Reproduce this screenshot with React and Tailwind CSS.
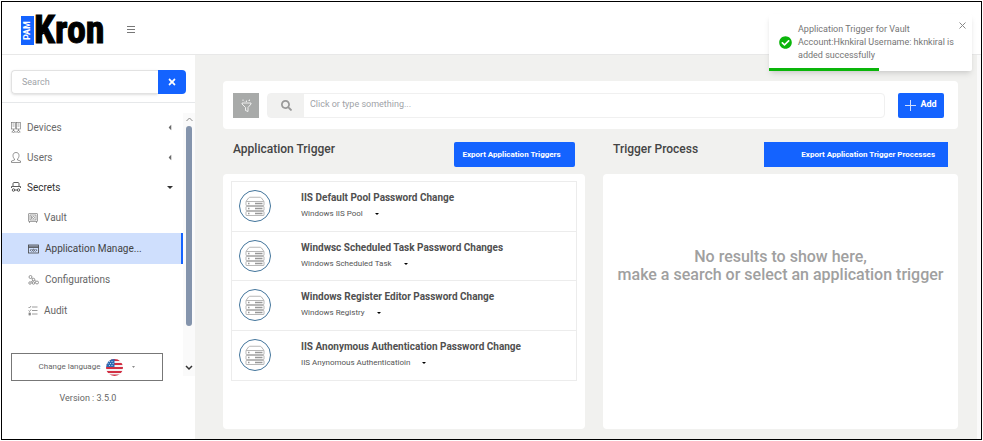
import { FaCheckCircle, FaSearch, FaTimes } from 'react-icons/fa';

const SECTIONS = [
  { id: 'devices', label: 'Devices', icon: DevicesIcon, open: false },
  { id: 'users', label: 'Users', icon: UserIcon, open: false },
  { id: 'secrets', label: 'Secrets', icon: SecretsIcon, open: true },
];

const SECRET_ITEMS = [
  { id: 'vault', label: 'Vault', icon: VaultIcon },
  { id: 'apps', label: 'Application Manage...', icon: AppIcon, active: true },
  { id: 'config', label: 'Configurations', icon: ConfigIcon },
  { id: 'audit', label: 'Audit', icon: AuditIcon },
];

const TRIGGERS = [
  { title: 'IIS Default Pool Password Change', type: 'Windows IIS Pool' },
  { title: 'Windwsc Scheduled Task Password Changes', type: 'Windows Scheduled Task' },
  { title: 'Windows Register Editor Password Change', type: 'Windows Registry' },
  { title: 'IIS Anonymous Authentication Password Change', type: 'IIS Anynomous Authenticatioin' },
];

/* ── Icons ── */

function DevicesIcon() {
  return (
    <svg className="w-[10px] h-[11px] shrink-0" viewBox="0 0 20 22" fill="none" stroke="currentColor" strokeWidth="1.2">
      <rect x="1" y="1" width="8" height="13" />
      <rect x="11" y="1" width="8" height="13" />
      <path d="M3 4h4M3 8h4M13 4h4M13 8h4M5 14v4M15 14v4M1 20h2M7 20h6M17 20h2" />
      <circle cx="5" cy="19" r="2" />
      <circle cx="15" cy="19" r="2" />
    </svg>
  );
}

function UserIcon() {
  return (
    <svg className="w-[10px] h-[11px] shrink-0" viewBox="0 0 20 22" fill="none" stroke="currentColor" strokeWidth="1.4">
      <path d="M7 14c-2-2-3-4-3-7 0-4 2.500-6 6-6s6 2 6 6c0 3-1 5-3 7v2l6 2v3H1v-3l6-2z" />
    </svg>
  );
}

function SecretsIcon() {
  return (
    <svg className="w-[10px] h-[10px] shrink-0" viewBox="0 0 20 20" fill="none" stroke="currentColor" strokeWidth="1.6">
      <path d="M4 8V3c0-1 1-2 2-2h8c1 0 2 1 2 2v5" />
      <path d="M1 12V9h18v3" />
      <circle cx="5" cy="16" r="2.500" />
      <circle cx="15" cy="16" r="2.500" />
      <path d="M7.500 16h5" />
    </svg>
  );
}

function VaultIcon() {
  return (
    <svg className="w-[10px] h-[10px] shrink-0" viewBox="0 0 20 20" fill="none" stroke="currentColor" strokeWidth="1.2">
      <rect x="1" y="1" width="18" height="16" rx="1" />
      <rect x="4" y="4" width="12" height="10" />
      <circle cx="11" cy="9" r="2" />
      <path d="M7 6v6M3 17v3M17 17v3" />
    </svg>
  );
}

function AppIcon() {
  return (
    <svg className="w-[11px] h-[10px] shrink-0" viewBox="0 0 22 20" fill="none" stroke="currentColor" strokeWidth="1.6">
      <rect x="1" y="2" width="20" height="16" />
      <path d="M1 7h20M1 4.500h20" />
      <path d="M7 10l-2.500 2.500L7 15M15 10l2.500 2.500L15 15" />
      <circle cx="11" cy="12.500" r="2" />
    </svg>
  );
}

function ConfigIcon() {
  return (
    <svg className="w-[11px] h-[10px] shrink-0" viewBox="0 0 22 20" fill="none" stroke="currentColor" strokeWidth="1.3">
      <circle cx="5" cy="4" r="3" />
      <circle cx="11" cy="9" r="2.500" />
      <circle cx="4" cy="16" r="2.500" />
      <circle cx="11" cy="16" r="2.500" />
      <circle cx="18" cy="15" r="3" />
      <path d="M7 6l2 1.500M10 11l-4 3M13 10.500l3 2" />
    </svg>
  );
}

function AuditIcon() {
  return (
    <svg className="w-[10px] h-[11px] shrink-0" viewBox="0 0 20 22" fill="none" stroke="currentColor" strokeWidth="1.3">
      <path d="M8 4h11M8 11h11M8 18h11" />
      <path d="M1 4l2 2 3-4M1 11l2 2 3-4" />
      <rect x="2" y="16" width="3" height="4" />
    </svg>
  );
}

function FilterIcon() {
  return (
    <svg className="w-[11px] h-[13px]" viewBox="0 0 22 26" fill="none" stroke="currentColor" strokeWidth="1.6">
      <path d="M2 8h18v2l-6 7v8l-5-2v-6L2 10z" />
      <path d="M4 1v3M11 3v3M17 1v3M7 4l1 1M14 2l1 1" />
    </svg>
  );
}

function ServerIcon() {
  return (
    <svg className="w-5 h-5" viewBox="0 0 40 40" fill="none" stroke="currentColor" strokeWidth="1.4">
      <path d="M2 11l5-7c1-1 2-1.500 3-1.500h20c1 0 2 .5 3 1.500l5 7" />
      <rect x="2" y="11" width="36" height="8" rx="1" />
      <rect x="2" y="21" width="36" height="8" rx="1" />
      <rect x="2" y="31" width="36" height="8" rx="1" />
      <path d="M20 15h15M20 25h15M20 35h15" strokeWidth="3" />
      <path d="M6 15h3M6 25h3M6 35h3" strokeWidth="3" />
    </svg>
  );
}

function Flag() {
  return (
    <svg className="w-[17px] h-[17px]" viewBox="0 0 34 34">
      <clipPath id="flag-round"><circle cx="17" cy="17" r="17" /></clipPath>
      <g clipPath="url(#flag-round)">
        <rect width="34" height="34" fill="#f4f1f2" />
        <path d="M0 2h34M0 10h34M0 18h34M0 26h34M0 33h34" stroke="#d22f43" strokeWidth="4" />
        <rect width="17" height="16" fill="#2c6bb3" />
        <path d="M6 5h2M11 5h2M3 9h2M8 9h2M13 9h2M6 13h2M11 13h2" stroke="#bcd4ee" strokeWidth="2" />
      </g>
    </svg>
  );
}

function CaretDown({ className }) {
  return (
    <svg className={className} viewBox="0 0 10 5" fill="currentColor">
      <path d="M0 0h10L5 5z" />
    </svg>
  );
}

/* ── Page parts ── */

function Header() {
  return (
    <header className="flex items-center h-[53px] pl-[19px] pt-1 bg-white border-b border-[#e8e8e8]">
      <div className="flex items-center">
        <span className="flex items-center justify-center w-[13px] h-[29px] bg-[#1463ff] text-white text-[9px] font-bold [writing-mode:vertical-rl] rotate-180">
          PAM
        </span>
        <span className="w-[70px] text-[38px] leading-[29px] font-bold text-black [-webkit-text-stroke:1px_black] font-['Liberation_Sans_Narrow','Roboto_Condensed','Roboto',sans-serif]">
          Kron
        </span>
      </div>
      <button type="button" aria-label="Toggle menu" className="ml-[23px] text-[#777]">
        <svg className="w-2 h-2" viewBox="0 0 8 8" stroke="currentColor" strokeWidth="1">
          <path d="M0 .5h8M0 3.500h8M0 6.500h8" />
        </svg>
      </button>
    </header>
  );
}

function Sidebar() {
  return (
    <aside className="flex flex-col w-[193px] shrink-0 bg-white">
      <div className="flex items-center h-12 pl-[9px] pt-[14px] pb-2 border-b border-[#e6e8ea]">
        <input
          type="text"
          aria-label="Search menu"
          placeholder="Search"
          className="w-[147px] h-6 px-[10px] text-[9px] border border-r-0 border-[#e2e2e2] rounded-l-sm shadow-sm outline-none placeholder:text-[#a0a3a8]"
        />
        <button type="button" aria-label="Clear search" className="flex items-center justify-center w-7 h-6 bg-[#1463ff] text-white rounded-r-sm">
          <FaTimes className="w-[10px] h-[10px]" />
        </button>
      </div>

      <div className="flex flex-1">
        <div className="flex-1 min-w-0 pt-[9px]">
          <nav>
            {SECTIONS.map(({ id, label, icon: Icon, open }) => (
              <button
                key={id}
                type="button"
                aria-expanded={open}
                className={`flex items-center w-full h-[30px] pl-[9px] pr-[10px] text-[10px] ${open ? 'text-[#333]' : 'text-[#6a6a6a]'}`}
              >
                <Icon />
                <span className="ml-[6px]">{label}</span>
                <CaretDown className={`ml-auto ${open ? 'w-[6px] h-[3px]' : 'w-[6px] h-[3px] rotate-90'}`} />
              </button>
            ))}
            {SECRET_ITEMS.map(({ id, label, icon: Icon, active }) => (
              <a
                key={id}
                href="#"
                className={`flex items-center gap-[6px] h-[31px] pl-[26px] text-[10px] ${
                  active ? 'bg-[#cfdffd] text-[#444] border-r-2 border-[#1463ff]' : 'text-[#666]'
                }`}
              >
                <Icon />
                <span className="whitespace-nowrap">{label}</span>
              </a>
            ))}
          </nav>

          <button type="button" className="flex items-center justify-center w-[152px] h-7 mt-[27px] ml-[9px] border border-[#777] text-[8px] text-[#666]">
            <span>Change language</span>
            <span className="ml-[6px] mr-[9px]"><Flag /></span>
            <CaretDown className="w-[3px] h-[2px]" />
          </button>
          <p className="w-[172px] mt-[10px] text-center text-[9px] leading-[14px] text-[#666]">Version : 3.5.0</p>
        </div>

        {/* Scrollbar */}
        <div className="flex flex-col items-center w-3 h-[263px] mt-[10px] bg-[#fafafa]">
          <svg className="w-[7px] h-[13px] text-[#888]" viewBox="0 0 7 13" fill="none" stroke="currentColor">
            <path d="M.5 8l3-3 3 3" />
          </svg>
          <div className="w-[6px] h-[200px] rounded-full bg-[#8494ac]" />
          <svg className="w-2 h-[13px] mt-auto text-[#333]" viewBox="0 0 8 13" fill="none" stroke="currentColor" strokeWidth="1.500">
            <path d="M1 3l3 3 3-3" />
          </svg>
        </div>
      </div>
    </aside>
  );
}

function SearchBar() {
  return (
    <div className="flex items-center h-12 pl-[10px] pr-[14px] bg-white rounded-sm">
      <button type="button" aria-label="Filter" className="flex items-center justify-center w-[26px] h-[25px] bg-[#a8aaa9] text-white">
        <FilterIcon />
      </button>
      <div className="flex flex-1 h-[25px] ml-2 mr-[13px] border border-[#f0f0f0] rounded-sm">
        <span className="flex items-center justify-center w-9 bg-[#f1f1f0] text-[#999]">
          <FaSearch className="w-[11px] h-[11px]" />
        </span>
        <input
          type="text"
          aria-label="Search triggers"
          placeholder="Click or type something..."
          className="flex-1 px-[6px] text-[9px] outline-none placeholder:text-[#a0a3a8]"
        />
      </div>
      <button type="button" className="flex items-center justify-center gap-1 w-[46px] h-[25px] bg-[#1463ff] text-white text-[9px] font-bold rounded-xs">
        <svg className="w-[11px] h-[11px]" viewBox="0 0 11 11" stroke="currentColor" strokeWidth="1">
          <path d="M5.500 0v11M0 5.500h11" opacity=".8" />
        </svg>
        Add
      </button>
    </div>
  );
}

function TriggerList() {
  return (
    <ul className="grid grid-rows-4 h-[200px] border border-[#ececec] divide-y divide-[#ececec]">
      {TRIGGERS.map((trigger) => (
        <li key={trigger.title} className="flex items-center pl-[7px]">
          <span className="flex items-center justify-center w-8 h-8 shrink-0 rounded-full border border-[#42749b] text-[#999]">
            <ServerIcon />
          </span>
          <div className="ml-[30px]">
            <p className="text-[10px] leading-4 font-bold text-[#505050]">{trigger.title}</p>
            <button type="button" className="flex items-center gap-[12px] text-[8px] leading-4 text-[#555]">
              {trigger.type}
              <CaretDown className="w-1 h-[2px] text-black" />
            </button>
          </div>
        </li>
      ))}
    </ul>
  );
}

function Toast() {
  return (
    <div role="status" className="absolute top-[12px] right-[9px] w-[203px] bg-white rounded-xs shadow-md">
      <div className="flex items-center h-[54px] pt-[2px] pl-[10px]">
        <FaCheckCircle className="w-[13px] h-[13px] shrink-0 text-[#0ab50a]" />
        <p className="ml-[6px] text-[9px] leading-[13px] text-[#757575]">
          Application Trigger for Vault<br />
          Account:Hknkiral Username: hknkiral is<br />
          added successfully
        </p>
      </div>
      <div className="w-[54%] h-[3px] bg-[#0ab50a]" />
      <button type="button" aria-label="Close" className="absolute top-[8px] right-[6px] text-[#888]">
        <svg className="w-[7px] h-[7px]" viewBox="0 0 7 7" stroke="currentColor">
          <path d="M.5 .5l6 6M6.500 .5l-6 6" />
        </svg>
      </button>
    </div>
  );
}

export default function App() {
  return (
    <div className="flex min-h-screen p-px bg-white font-['Roboto',sans-serif]">
      <div className="relative flex flex-col flex-1 border border-black">
        <Header />
        <div className="flex flex-1">
          <Sidebar />
          <main className="flex flex-col flex-1 min-w-0 pt-[26px] pr-[19px] pb-[10px] pl-7 bg-[#f1f1ef] border-r-4 border-[#fafafa]">
            <SearchBar />
            <div className="grid flex-1 grid-cols-[1.02fr_1fr] gap-[18px] mt-[13px]">
              <section className="flex flex-col">
                <div className="flex justify-between px-[10px]">
                  <h2 className="text-[12px] leading-[14px] font-medium text-[#444]">Application Trigger</h2>
                  <button type="button" className="w-[121px] h-[25px] pr-[6px] bg-[#1463ff] text-white text-[8px] font-bold rounded-xs">
                    Export Application Triggers
                  </button>
                </div>
                <div className="flex-1 mt-[7px] px-2 pt-[7px] bg-white rounded-sm">
                  <TriggerList />
                </div>
              </section>

              <section className="flex flex-col">
                <div className="flex justify-between px-[10px]">
                  <h2 className="text-[12px] leading-[14px] font-medium text-[#444]">Trigger Process</h2>
                  <button type="button" className="w-[184px] h-[25px] pr-[13px] bg-[#1463ff] text-white text-right text-[8px] font-bold">
                    Export Application Trigger Processes
                  </button>
                </div>
                <div className="flex-1 mt-[7px] pt-[74px] bg-white rounded-sm">
                  <p className="text-center text-[16px] leading-[18px] font-medium text-[#a0a0a0]">
                    No results to show here,<br />
                    make a search or select an application trigger
                  </p>
                </div>
              </section>
            </div>
          </main>
        </div>
        <Toast />
      </div>
    </div>
  );
}
